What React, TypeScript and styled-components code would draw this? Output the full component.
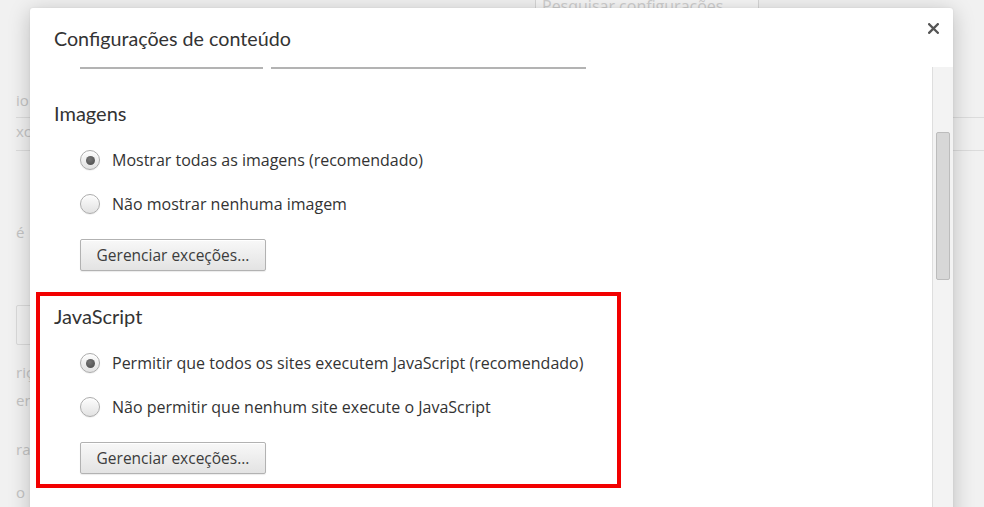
import React from 'react';
import styled, { createGlobalStyle, css } from 'styled-components';

const GlobalStyle = createGlobalStyle`
  html, body { margin: 0; padding: 0; }
  body {
    background: #f1f1f1;
    font-family: Lato, "Open Sans", "Liberation Sans", sans-serif;
  }
  #root { width: 984px; height: 507px; }
`;

const Screen = styled.div`
  position: relative;
  width: 984px;
  height: 507px;
  overflow: hidden;
  background: #f1f1f1;
`;

/* ---------- faded settings page behind the dialog ---------- */
const BgPage = styled.div`
  display: flex;
  flex-direction: column;
  color: #c4c4c4;
  font-family: "Open Sans", sans-serif;
  font-size: 15px;
`;

const SearchBox = styled.div`
  margin: -9px 0 0 535px;
  width: 224px;
  height: 30px;
  box-sizing: border-box;
  border: 1px solid #d6d6d6;
  background: #f6f6f6;
  padding: 4px 0 0 6px;
  font-size: 16px;
  line-height: 20px;
  color: #cfcfcf;
`;

const BgList = styled.div`
  display: flex;
  flex-direction: column;
  margin: 68px 0 0 16px;
`;

const BgItem = styled.div<{ $gap?: number }>`
  margin-top: ${(p) => p.$gap ?? 0}px;
  height: 22px;
  line-height: 22px;
  white-space: nowrap;
`;

const BgRule = styled.div<{ $h: number }>`
  height: ${(p) => p.$h}px;
  border-bottom: 1px solid #dcdcdc;
`;

const BgBox = styled.div`
  margin: 62px 0 0 0;
  width: 40px;
  height: 40px;
  box-sizing: border-box;
  border: 1px solid #dadada;
  border-radius: 2px;
`;

/* ---------- dialog ---------- */
const Dialog = styled.div`
  position: absolute;
  left: 30px;
  top: 8px;
  width: 923px;
  height: 540px;
  background: #fff;
  border-radius: 3px;
  box-shadow: 0 4px 22px rgba(0, 0, 0, 0.22), 0 0 2px rgba(0, 0, 0, 0.08);
  display: flex;
  flex-direction: column;
  color: #333;
`;

const Header = styled.div`
  height: 59px;
  flex: none;
  display: flex;
  justify-content: space-between;
  align-items: flex-start;
  padding: 0 14px 0 24px;
`;

const Title = styled.h1`
  margin: 19px 0 0;
  font-size: 19.7px;
  line-height: 24px;
  font-weight: 400;
  color: #333;
`;

const CloseButton = styled.button`
  margin-top: 15px;
  width: 11px;
  height: 11px;
  padding: 0;
  border: 0;
  background: none;
  display: flex;
  cursor: pointer;
`;

const Body = styled.div`
  flex: 1;
  display: flex;
  min-height: 0;
`;

const Content = styled.div`
  flex: 1;
  display: flex;
  flex-direction: column;
  gap: 7px;
  padding-left: 24px;
  overflow: hidden;
`;

const FieldRow = styled.div`
  display: flex;
  gap: 8px;
  margin: 0 0 13px 26px;
`;

const FieldLine = styled.div<{ $w: number }>`
  width: ${(p) => p.$w}px;
  height: 2px;
  background: #b3b3b3;
`;

const Section = styled.section<{ $highlight?: boolean }>`
  display: flex;
  flex-direction: column;
  align-items: flex-start;
  padding: 12px 0 14px 0;
  ${(p) =>
    p.$highlight &&
    css`
      margin-left: -18px;
      width: 585px;
      box-sizing: border-box;
      border: 4px solid #f20000;
      padding: 8px 0 10px 14px;
    `}
`;

const SectionTitle = styled.h2`
  margin: 0 0 23px;
  font-size: 20px;
  line-height: 24px;
  font-weight: 400;
  color: #333;
`;

const Options = styled.div`
  display: flex;
  flex-direction: column;
  gap: 20px;
  margin-left: 26px;
`;

const Option = styled.label`
  display: flex;
  align-items: center;
  gap: 12px;
  height: 24px;
  font-family: "Open Sans", sans-serif;
  font-size: 16px;
  color: #333;
  cursor: pointer;
`;

const Radio = styled.span<{ $checked?: boolean }>`
  position: relative;
  width: 20px;
  height: 20px;
  box-sizing: border-box;
  border-radius: 50%;
  border: 1px solid #acacac;
  background: linear-gradient(#fdfdfd, #e2e2e2);
  box-shadow: inset 0 1px 1px rgba(255, 255, 255, 0.9), 0 1px 1px rgba(0, 0, 0, 0.06);
  flex: none;
  ${(p) =>
    p.$checked &&
    css`
      &::after {
        content: '';
        position: absolute;
        left: 4.5px;
        top: 4.5px;
        width: 9px;
        height: 9px;
        border-radius: 50%;
        background: radial-gradient(circle at 40% 35%, #777, #484848);
      }
    `}
`;

const Button = styled.button`
  margin: 23px 0 0 26px;
  width: 186px;
  height: 32px;
  box-sizing: border-box;
  border: 1px solid #b2b2b2;
  border-radius: 2px;
  background: linear-gradient(#f8f8f8, #e3e3e3);
  box-shadow: 0 1px 1px rgba(0, 0, 0, 0.08), inset 0 1px 0 #fff;
  font-family: "Open Sans", sans-serif;
  font-size: 15.5px;
  color: #3c3c3c;
  padding: 0;
`;

const Scrollbar = styled.div`
  width: 21px;
  flex: none;
  box-sizing: border-box;
  background: #f3f3f3;
  border-left: 1px solid #dedede;
  padding: 65px 3px 0 3px;
`;

const Thumb = styled.div`
  height: 148px;
  box-sizing: border-box;
  border: 1px solid #bcbcbc;
  border-radius: 2px;
  background: #d7d7d7;
`;

const CloseIcon = () => (
  <svg width="11" height="11" viewBox="0 0 11 11">
    <path d="M1.2 1.2 L9.8 9.8 M9.8 1.2 L1.2 9.8" stroke="#555" strokeWidth="2.3" strokeLinecap="square" />
  </svg>
);

type Opt = { label: string; checked?: boolean };

const SettingSection = ({
  title,
  options,
  highlight,
}: {
  title: string;
  options: Opt[];
  highlight?: boolean;
}) => (
  <Section $highlight={highlight}>
    <SectionTitle>{title}</SectionTitle>
    <Options>
      {options.map((o) => (
        <Option key={o.label}>
          <Radio $checked={o.checked} />
          {o.label}
        </Option>
      ))}
    </Options>
    <Button>Gerenciar exceções...</Button>
  </Section>
);

export default function App() {
  return (
    <Screen>
      <GlobalStyle />
      <BgPage>
        <SearchBox>Pesquisar configurações</SearchBox>
        <BgList>
          <BgItem>io</BgItem>
          <BgRule $h={6} />
          <BgItem $gap={2}>xc</BgItem>
          <BgRule $h={8} />
          <BgItem $gap={70}>é</BgItem>
          <BgBox />
          <BgItem $gap={16}>riç</BgItem>
          <BgItem $gap={6}>en</BgItem>
          <BgItem $gap={27}>ra</BgItem>
          <BgItem $gap={21}>o</BgItem>
        </BgList>
      </BgPage>

      <Dialog>
        <Header>
          <Title>Configurações de conteúdo</Title>
          <CloseButton aria-label="Fechar">
            <CloseIcon />
          </CloseButton>
        </Header>
        <Body>
          <Content>
            <FieldRow>
              <FieldLine $w={183} />
              <FieldLine $w={315} />
            </FieldRow>
            <SettingSection
              title="Imagens"
              options={[
                { label: 'Mostrar todas as imagens (recomendado)', checked: true },
                { label: 'Não mostrar nenhuma imagem' },
              ]}
            />
            <SettingSection
              title="JavaScript"
              highlight
              options={[
                { label: 'Permitir que todos os sites executem JavaScript (recomendado)', checked: true },
                { label: 'Não permitir que nenhum site execute o JavaScript' },
              ]}
            />
          </Content>
          <Scrollbar>
            <Thumb />
          </Scrollbar>
        </Body>
      </Dialog>
    </Screen>
  );
}
